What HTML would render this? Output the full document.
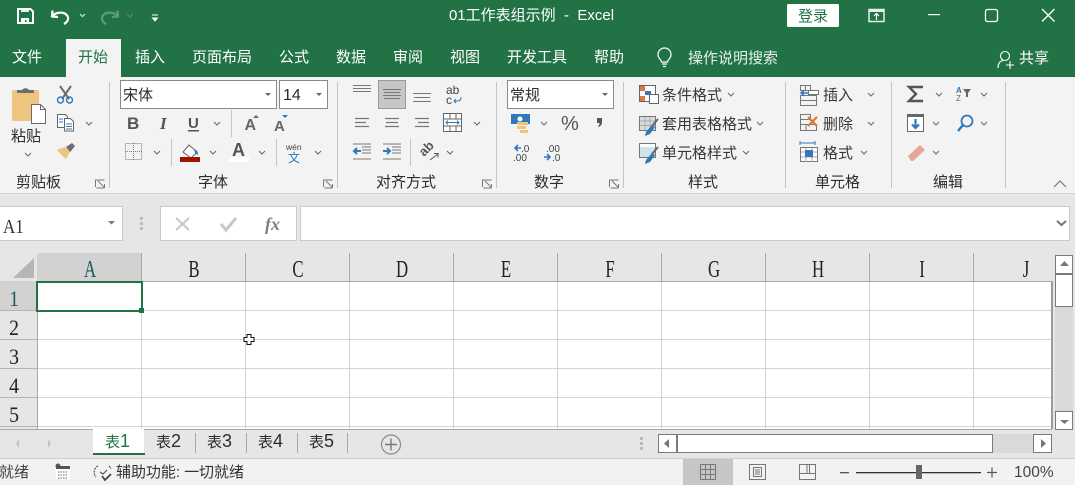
<!DOCTYPE html>
<html><head><meta charset="utf-8"><style>
html,body{margin:0;padding:0;background:#e6e6e6;overflow:hidden}
svg{display:block;position:absolute;left:0;top:0}
text{font-family:"Liberation Sans","Noto Sans CJK SC",sans-serif;font-size:15px;fill:#2c2c2c}
.w{fill:#fff}.t{font-size:15px}
.s{font-family:"Liberation Serif","Noto Serif CJK SC",serif;font-size:24px;text-anchor:middle;fill:#222}
.r{font-family:"Liberation Serif",serif;font-size:22px;text-anchor:middle;fill:#222}
.g{font-size:15px;fill:#383838}
.d{font-size:18px}
</style></head><body>
<svg width="1075" height="485" viewBox="0 0 1075 485" xmlns="http://www.w3.org/2000/svg">
<defs><path id="c" d="M0 0l3 3l3-3" fill="none" stroke="#666" stroke-width="1"/></defs>
<rect width="1075" height="485" fill="#e6e6e6"/>
<rect width="1075" height="77" fill="#217346"/>
<rect y="77" width="1075" height="116" fill="#f3f3f3"/>
<rect y="193" width="1075" height="1" fill="#d2d2d2"/>
<rect x="66" y="39" width="55" height="38" fill="#f3f3f3"/>

<!-- QAT -->
<path d="M18 9h12.500l2.500 2.500v11.500h-15z" fill="none" stroke="#fff" stroke-width="2"/>
<rect x="21" y="9" width="8" height="3" fill="#fff" opacity=".9"/>
<path d="M21 24v-6h8v6h-2.500v-4h-1.500v4z" fill="#fff"/>
<path d="M52.500 10.500l-.5 6l6 .5 M52.500 16c3-4 12-5 15 0c1.500 3 0 6-3.500 8" fill="none" stroke="#fff" stroke-width="2.200"/>
<path d="M80 14l2.500 2.500l2.500-2.500" fill="none" stroke="#d5e5dc" stroke-width="1.200"/>
<path d="M117.500 10.500l.5 6l-6 .5 M117.500 16c-3-4-12-5-15 0c-1.500 3 0 6 3.500 8" fill="none" stroke="#5f9a7c" stroke-width="2.200"/>
<path d="M127 14l3 3l3-3" fill="none" stroke="#4f8e6e" stroke-width="1.200"/>
<path d="M152 15h6M152.500 18h5l-2.500 3z" stroke="#fff" fill="#fff" stroke-width="1"/>

<text x="449" y="20" class="w" style="font-size:15px" xml:space="preserve">01工作表组示例  -  Excel</text>

<rect x="787" y="4" width="52" height="23" rx="1.500" fill="#fff"/>
<text x="798" y="21" style="font-size:15px;fill:#217346">登录</text>
<rect x="869" y="9.500" width="15" height="12" fill="none" stroke="#e6efea" stroke-width="1.500"/><rect x="869" y="9" width="15" height="3" fill="#e6efea"/><path d="M876.500 20v-6M874 16l2.500-2.500l2.500 2.500" fill="none" stroke="#fff" stroke-width="1.200"/>
<rect x="928" y="14" width="12" height="1.200" fill="#fff"/>
<rect x="985.500" y="9.500" width="12" height="12" rx="2" fill="none" stroke="#fff" stroke-width="1.300"/>
<path d="M1042 9l12.500 12.500M1054.500 9l-12.500 12.500" stroke="#fff" stroke-width="1.300" fill="none"/>

<!-- tabs -->
<text x="12" y="62" class="w t">文件</text>
<text x="78" y="62" class="t" style="fill:#217346">开始</text>
<text x="135" y="62" class="w t">插入</text>
<text x="192" y="62" class="w t">页面布局</text>
<text x="279" y="62" class="w t">公式</text>
<text x="336" y="62" class="w t">数据</text>
<text x="393" y="62" class="w t">审阅</text>
<text x="450" y="62" class="w t">视图</text>
<text x="507" y="62" class="w t">开发工具</text>
<text x="594" y="62" class="w t">帮助</text>
<text x="688" y="63" class="w t" style="fill:#e8f0ec">操作说明搜索</text>
<text x="1019" y="63" class="w t">共享</text>
<path d="M661.500 62c0-2-3.500-3.500-3.500-7.500a6.500 6.500 0 0 1 13 0c0 4-3.500 5.500-3.500 7.500zM662 64h5M663 66.500h3" fill="none" stroke="#fff" stroke-width="1.200"/>
<circle cx="1005" cy="56" r="4.500" fill="none" stroke="#fff" stroke-width="1.100"/><path d="M998 68c0-5 2-7 5-7.500M1006 65h8M1010 61v8" fill="none" stroke="#fff" stroke-width="1.100"/>

<!-- separators -->
<g fill="#c4c4c4">
<rect x="109" y="82" width="1" height="106"/><rect x="337" y="82" width="1" height="106"/><rect x="496" y="82" width="1" height="106"/><rect x="623" y="82" width="1" height="106"/><rect x="785" y="82" width="1" height="106"/><rect x="891" y="82" width="1" height="106"/><rect x="1005" y="82" width="1" height="106"/>
<rect x="231" y="110" width="1" height="27"/><rect x="171" y="139" width="1" height="27"/><rect x="276" y="139" width="1" height="27"/><rect x="410" y="139" width="1" height="27"/>
</g>

<!-- clipboard -->
<rect x="12" y="90" width="27" height="31" rx="2" fill="#edc57f"/>
<path d="M17 93v-3h5a4 3.500 0 0 1 7 0h5v3z" fill="#6d6d6d"/>
<path d="M31.500 104.500h9l5 5v14h-14z" fill="#fff" stroke="#6a6a6a"/>
<path d="M40.500 104.500v5h5" fill="none" stroke="#6a6a6a"/>
<text x="11" y="141" style="font-size:15px">粘贴</text>
<use href="#c" x="25" y="153"/>
<path d="M60 86l9 13M71 86l-9 13" stroke="#6d6d6d" stroke-width="2" fill="none"/>
<circle cx="60.500" cy="100" r="3" fill="none" stroke="#2f78b9" stroke-width="1.400"/><circle cx="69.500" cy="100" r="3" fill="none" stroke="#2f78b9" stroke-width="1.400"/>
<path d="M57.500 114.500h8l2 2v11h-10z" fill="#fff" stroke="#666"/><path d="M64.500 118.500h6l3 3v9.500h-9z" fill="#fff" stroke="#666"/><path d="M66 124h6M66 126.500h6M66 129h6" stroke="#2f78b9"/><path d="M59 119h4M59 122h4" stroke="#2f78b9"/>
<use href="#c" x="86" y="122"/>
<path d="M57 150l8-3l5 5l-4 7q-5-4-9-9z" fill="#edc57f"/><path d="M66 147l6-4l3 3l-4 5l-1 1z" fill="#6d6d6d"/>

<!-- font -->
<rect x="120.500" y="80.500" width="156" height="28" fill="#fff" stroke="#8a8a8a"/>
<text x="123" y="100" style="font-size:15px">宋体</text>
<path d="M265 93h6l-3 3z" fill="#666"/>
<rect x="279.500" y="80.500" width="48" height="28" fill="#fff" stroke="#8a8a8a"/>
<text x="283" y="100" style="font-size:16px">14</text>
<path d="M316 93h6l-3 3z" fill="#666"/>
<text x="127" y="129" style="font:bold 17px 'Liberation Sans';fill:#555">B</text>
<text x="160" y="129" style="font:italic bold 17px 'Liberation Serif';fill:#555">I</text>
<text x="188" y="128" style="font:bold 15px 'Liberation Sans';fill:#555">U</text><rect x="188" y="130" width="11" height="1.500" fill="#555"/>
<use href="#c" x="214" y="122"/>
<text x="244.500" y="130" style="font:bold 16px 'Liberation Sans';fill:#666">A</text><path d="M253 118h6l-3-3z" fill="#2f78b9"/>
<text x="274" y="131" style="font:bold 15px 'Liberation Sans';fill:#666">A</text><path d="M282 115h6l-3 3z" fill="#2f78b9"/>
<rect x="125.500" y="143.500" width="16" height="16" fill="none" stroke="#777" stroke-dasharray="1 1"/><path d="M133.500 143v17M125 151.500h17" stroke="#777" stroke-dasharray="1 1"/>
<use href="#c" x="154" y="151"/>
<path d="M183 152l6-7l8 7l-6 6z" fill="#fff" stroke="#666"/><path d="M194 149c3 1 4 3 4 6l-3-2z" fill="#2f78b9"/>
<rect x="180" y="157" width="20" height="5" fill="#a61000"/>
<use href="#c" x="210" y="151"/>
<text x="232" y="156" style="font:bold 18px 'Liberation Sans';fill:#555">A</text>
<rect x="229" y="157" width="20" height="5" fill="#fff"/>
<use href="#c" x="259" y="151"/>
<text x="286" y="150" style="font-size:8.500px;fill:#444">wén</text><text x="288" y="162" style="font-size:12px;fill:#2f78b9">文</text>
<use href="#c" x="315" y="151"/>

<!-- alignment -->
<rect x="378.500" y="80.500" width="27" height="28" fill="#c6c6c6" stroke="#9a9a9a"/>
<path d="M353 85.500h18M353 88.500h18M353 91.500h18 M383 89.500h18M384 92.500h16M383 95.500h18M384 98.500h16 M413 93.500h18M414 97.500h16M413 101.500h18" stroke="#777" fill="none"/>
<text x="446" y="94" style="font-size:12px;fill:#444">ab</text><text x="446" y="104" style="font-size:12px;fill:#444">c</text><path d="M461 97c0 3-1 4-3 4h-4M456 99l-2 2l2 2" stroke="#2f78b9" fill="none"/>
<path d="M355 118.500h14M355 122.500h11M355 126.500h14 M385 118.500h14M386 122.500h12M385 126.500h14 M415 118.500h14M418 122.500h11M415 126.500h14" stroke="#777" stroke-width="1.200"/>
<rect x="443.500" y="113.500" width="18" height="18" fill="#fff" stroke="#666"/><path d="M444 119h17M444 126h17M450 114v5M456 114v5M450 126v5M456 126v5" stroke="#666"/><path d="M446 122.500h13M448 120.500l-2 2l2 2M457 120.500l2 2l-2 2" stroke="#2f78b9" fill="none"/>
<use href="#c" x="474" y="122"/>
<path d="M353 144h18M362 147h9M362 150h9M362 153h9M353 159h18" stroke="#777"/><path d="M361 151h-7M357 148l-3 3l3 3" stroke="#2f78b9" stroke-width="2" fill="none"/>
<path d="M383 144h18M392 147h9M392 150h9M392 153h9M383 159h18" stroke="#777"/><path d="M383 151h7M387 148l3 3l-3 3" stroke="#2f78b9" stroke-width="2" fill="none"/>
<text transform="translate(424,157) rotate(-45)" style="font:bold 13px 'Liberation Sans';fill:#555">ab</text><path d="M430 160l8-6M434 153.500h4v4" stroke="#555" fill="none"/>
<use href="#c" x="447" y="151"/>

<!-- number -->
<rect x="507.500" y="80.500" width="106" height="28" fill="#fff" stroke="#8a8a8a"/>
<text x="510" y="100" style="font-size:15px">常规</text>
<path d="M602 93h6l-3 3z" fill="#666"/>
<rect x="511" y="114" width="19" height="10" fill="#2f78b9"/><circle cx="520" cy="119" r="2.500" fill="#fff"/>
<rect x="517" y="122" width="11" height="3" fill="#edc57f"/><rect x="517" y="126" width="9" height="3" fill="#edc57f"/><rect x="520" y="130" width="8" height="3" fill="#edc57f"/>
<use href="#c" x="541" y="122"/>
<text x="561" y="130" style="font-size:20px;fill:#555">%</text>
<path d="M597 118h5v4q0 3-3 5l-1-1q1.500-1 1.500-3h-2.500z" fill="#555"/>
<text x="521" y="152" style="font-size:10px;fill:#444">.0</text><text x="513" y="161" style="font-size:10px;fill:#444">.00</text><path d="M521 148h-6M518 145l-3 3l3 3" stroke="#2f78b9" stroke-width="1.600" fill="none"/>
<text x="546" y="152" style="font-size:10px;fill:#444">.00</text><text x="552" y="161" style="font-size:10px;fill:#444">.0</text><path d="M544 157h6M547 154l3 3l-3 3" stroke="#2f78b9" stroke-width="1.600" fill="none"/>

<!-- styles -->
<rect x="639.500" y="85.500" width="16" height="16" fill="#fff" stroke="#666"/><rect x="640" y="86" width="5" height="5" fill="#d97a3a"/><rect x="645" y="91" width="6" height="4" fill="#2f78b9"/><rect x="640" y="96" width="5" height="5" fill="#d97a3a"/><rect x="649.500" y="94.500" width="9" height="9" fill="#fff" stroke="#666"/>
<text x="662" y="100" class="g">条件格式</text><use href="#c" x="728" y="93"/>
<rect x="639.500" y="116.500" width="16" height="14" fill="#d6dde0" stroke="#777"/><path d="M640 121h15M640 125.500h15M645 117v13M650 117v13" stroke="#aaa"/><path d="M646 132l6-7l3 2l-5 7l-5 2z" fill="#2f78b9"/><path d="M652 126l6-7" stroke="#666" stroke-width="2"/>
<text x="662" y="129" class="g">套用表格格式</text><use href="#c" x="757" y="122"/>
<rect x="639.500" y="143.500" width="16" height="14" fill="#cfe3e8" stroke="#777"/><rect x="640" y="144" width="15" height="3" fill="#fff"/><path d="M646 160l6-7l3 2l-5 7l-5 2z" fill="#2f78b9"/><path d="M652 154l6-7" stroke="#666" stroke-width="2"/>
<text x="662" y="158" class="g">单元格样式</text><use href="#c" x="743" y="151"/>

<!-- cells -->
<path d="M800.500 85.500h10v5h-10zM800.500 95.500h16v5h-16zM800.500 100.500h16v5h-16zM805.500 86v5" fill="none" stroke="#777"/><path d="M801 93h8M804 90.500l-3 2.500l3 2.500" stroke="#2f78b9" stroke-width="1.500" fill="none"/><rect x="808.500" y="90.500" width="10" height="4" fill="#fff" stroke="#777"/>
<text x="823" y="100" class="g">插入</text><use href="#c" x="868" y="93"/>
<path d="M800.500 114.500h10v5h-10zM800.500 124.500h16v6h-16zM806 125v5M800.500 119.500v5" fill="none" stroke="#777"/><path d="M808 117l9 9M817 117l-9 9" stroke="#d97a3a" stroke-width="2.200"/>
<text x="823" y="129" class="g">删除</text><use href="#c" x="868" y="122"/>
<path d="M800 143h15M800 141v4M815 141v4" stroke="#2f78b9" fill="none"/><rect x="800.500" y="147.500" width="17" height="14" fill="#fff" stroke="#777"/><path d="M806 148v14M812 148v14M801 152h16M801 157h16" stroke="#aaa"/><rect x="805" y="150" width="8" height="7" fill="#2f78b9"/>
<text x="823" y="158" class="g">格式</text><use href="#c" x="861" y="151"/>

<!-- editing -->
<path d="M923 87h-14l7 7l-7 7h14" fill="none" stroke="#555" stroke-width="2.400"/>
<use href="#c" x="936" y="93"/>
<text x="956" y="93" style="font:bold 8px 'Liberation Sans';fill:#2f78b9">A</text><text x="956" y="101" style="font:8px 'Liberation Sans';fill:#666">Z</text><path d="M963 89h8l-3 4v4h-2v-4z" fill="#666"/>
<use href="#c" x="981" y="93"/>
<rect x="907.500" y="114.500" width="16" height="17" fill="#fff" stroke="#666"/><rect x="907" y="114" width="17" height="3" fill="#666"/><path d="M915.500 119v9M912 124.500l3.500 3.500l3.500-3.500" stroke="#2f78b9" stroke-width="2.200" fill="none"/>
<use href="#c" x="933" y="122"/>
<circle cx="967" cy="121" r="5.500" fill="none" stroke="#2f78b9" stroke-width="1.800"/><path d="M963 125l-5 6" stroke="#2f78b9" stroke-width="2.400"/>
<use href="#c" x="981" y="122"/>
<path d="M908 156l12-11l5 5l-12 11h-2z" fill="#e5a898"/><use href="#c" x="933" y="151"/>

<!-- group labels -->
<text x="16" y="187">剪贴板</text><text x="198" y="187">字体</text><text x="376" y="187">对齐方式</text><text x="534" y="187">数字</text><text x="688" y="187">样式</text><text x="815" y="187">单元格</text><text x="933" y="187">编辑</text>
<g fill="none" stroke="#777">
<path d="M95.500 187v-7h9M104.500 188h-8M98 181l6 6M104.500 184v4"/>
<path d="M323.500 187v-7h9M332.500 188h-8M326 181l6 6M332.500 184v4"/>
<path d="M482.500 187v-7h9M491.500 188h-8M485 181l6 6M491.500 184v4"/>
<path d="M609.500 187v-7h9M618.500 188h-8M612 181l6 6M618.500 184v4"/>
<path d="M1054 187l6-6l6 6" stroke="#666"/>
</g>

<!-- formula bar -->
<rect x="-1" y="206.500" width="123.500" height="34" fill="#fff" stroke="#cbcbcb"/>
<text transform="translate(3,233) scale(.85,1)" style="font-family:'Liberation Serif',serif;font-size:20px;fill:#333">A1</text>
<path d="M108 221h7l-3.500 3.500z" fill="#777"/>
<rect x="140" y="217" width="3" height="3" fill="#bbb"/><rect x="140" y="222" width="3" height="3" fill="#bbb"/><rect x="140" y="227" width="3" height="3" fill="#bbb"/>
<rect x="160.500" y="206.500" width="136" height="34" fill="#fff" stroke="#cbcbcb"/>
<path d="M176 218l13 12M189 218l-13 12" stroke="#c8c8c8" stroke-width="2.200"/>
<path d="M221 224l5 6l10-12" stroke="#c8c8c8" stroke-width="3" fill="none"/>
<text x="265" y="230" style="font:italic bold 18px 'Liberation Serif';fill:#808080">fx</text>
<rect x="300.500" y="206.500" width="769" height="34" fill="#fff" stroke="#cbcbcb"/>
<path d="M1057 221l4.500 4l4.500-4" stroke="#777" stroke-width="2" fill="none"/>

<!-- grid -->
<rect x="37" y="281" width="1015" height="148" fill="#fff"/>
<rect x="37" y="253" width="105" height="28" fill="#d2d2d2"/>
<rect x="0" y="281" width="37" height="30" fill="#d2d2d2"/>
<path d="M13 278l21-20v20z" fill="#b5b5b5"/>
<g stroke="#d4d4d4">
<path d="M0 310.500H1052M0 339.500H1052M0 368.500H1052M0 397.500H1052M0 426.500H1052"/>
<path d="M141.500 281V429M245.500 281V429M349.500 281V429M453.500 281V429M557.500 281V429M661.500 281V429M765.500 281V429M869.500 281V429M973.500 281V429"/>
</g>
<g stroke="#a9a9a9">
<path d="M141.500 253V281M245.500 253V281M349.500 253V281M453.500 253V281M557.500 253V281M661.500 253V281M765.500 253V281M869.500 253V281M973.500 253V281"/>
<path d="M37 281.500H1052"/><path d="M37.500 281V429"/><path d="M1052 281V429" stroke-width="2" stroke="#9c9c9c"/>
<path d="M0 429.500H1052" stroke-width="1"/>
</g>
<g stroke="#b5b5b5"><path d="M0 310.500H37M0 339.500H37M0 368.500H37M0 397.500H37M0 426.500H37"/></g>
<text transform="translate(90,277) scale(.7,1)" class="s" style="fill:#1f5a5a">A</text>
<text transform="translate(194,277) scale(.7,1)" class="s">B</text>
<text transform="translate(298,277) scale(.7,1)" class="s">C</text>
<text transform="translate(402,277) scale(.7,1)" class="s">D</text>
<text transform="translate(506,277) scale(.7,1)" class="s">E</text>
<text transform="translate(610,277) scale(.7,1)" class="s">F</text>
<text transform="translate(714,277) scale(.7,1)" class="s">G</text>
<text transform="translate(818,277) scale(.7,1)" class="s">H</text>
<text transform="translate(922,277) scale(.7,1)" class="s">I</text>
<text transform="translate(1026,277) scale(.7,1)" class="s">J</text>
<text transform="translate(14,306) scale(.9,1)" class="r" style="fill:#1f5a5a">1</text>
<text transform="translate(14,335) scale(.9,1)" class="r">2</text>
<text transform="translate(14,364) scale(.9,1)" class="r">3</text>
<text transform="translate(14,393) scale(.9,1)" class="r">4</text>
<text transform="translate(14,422) scale(.9,1)" class="r">5</text>
<rect x="37" y="282" width="105" height="29" fill="#fff" stroke="#217346" stroke-width="2"/>
<rect x="139" y="308" width="5" height="5" fill="#217346"/>

<!-- v scroll -->
<rect x="1055" y="255" width="18" height="156" fill="#d9d9d9"/>
<rect x="1055.500" y="255.500" width="17" height="18" fill="#fff" stroke="#7a7a7a"/>
<path d="M1060 266h9l-4.500-5z" fill="#777"/>
<rect x="1055.500" y="274.500" width="17" height="32" fill="#fff" stroke="#7a7a7a"/><rect x="1055" y="273" width="18" height="2" fill="#7a7a7a"/>
<rect x="1055.500" y="411.500" width="17" height="18" fill="#fff" stroke="#7a7a7a"/>
<path d="M1060 420h9l-4.500 4z" fill="#777"/>

<!-- sheet tabs -->
<path d="M19 439v9l-3-4.500zM48 439v9l3-4.500z" fill="#c4c4c4"/>
<rect x="93" y="429" width="51" height="25" fill="#fff"/><rect x="93" y="453" width="52" height="2" fill="#217346"/>
<text x="105" y="447" style="fill:#217346">表<tspan class="d" style="fill:#217346">1</tspan></text>
<text x="156" y="447">表<tspan class="d">2</tspan></text><text x="207" y="447">表<tspan class="d">3</tspan></text><text x="258" y="447">表<tspan class="d">4</tspan></text><text x="309" y="447">表<tspan class="d">5</tspan></text>
<path d="M195.500 433v20M246.500 433v20M297.500 433v20M347.500 433v20" stroke="#a8a8a8"/>
<circle cx="391" cy="444.500" r="9.500" fill="none" stroke="#8a8a8a" stroke-width="1.200"/><path d="M385 444.500h12M391 438.500v12" stroke="#777" stroke-width="1.400"/>
<rect x="640" y="437" width="3" height="3" fill="#bbb"/><rect x="640" y="442" width="3" height="3" fill="#bbb"/><rect x="640" y="447" width="3" height="3" fill="#bbb"/>
<!-- h scroll -->
<rect x="658" y="434" width="393" height="19" fill="#d9d9d9"/>
<rect x="658.500" y="434.500" width="18" height="18" fill="#fff" stroke="#7a7a7a"/><path d="M669 439v9l-5-4.500z" fill="#777"/>
<rect x="677.500" y="434.500" width="315" height="18" fill="#fff" stroke="#7a7a7a"/><rect x="676" y="434" width="2" height="19" fill="#7a7a7a"/>
<rect x="1033.500" y="434.500" width="18" height="18" fill="#fff" stroke="#7a7a7a"/><path d="M1041 439v9l5-4.500z" fill="#777"/>

<!-- status bar -->
<rect y="458" width="1075" height="27" fill="#f2f2f2"/><rect y="458" width="1075" height="1" fill="#d0d0d0"/>
<text x="-1" y="477" style="font-size:15px;fill:#444">就绪</text>
<rect x="56" y="466" width="14" height="13" fill="#fff"/><rect x="56" y="466" width="14" height="3" fill="#555"/><circle cx="58" cy="466" r="2.500" fill="#555"/><path d="M58 472h10M58 475h10M58 478h10" stroke="#666" stroke-dasharray="1.500 1"/>
<path d="M98 466a7 7 0 0 0-2 11M109 466a7 7 0 0 1 2 3" fill="none" stroke="#555" stroke-width="1.200" stroke-dasharray="2 1"/><path d="M102 476l3 4l6-6" fill="none" stroke="#444" stroke-width="1.800"/><path d="M100 472l3 2l4-4" fill="none" stroke="#555" stroke-width="1.200"/>
<text x="116" y="477" style="font-size:15px;fill:#333" textLength="128">辅助功能: 一切就绪</text>
<rect x="683" y="459" width="50" height="26" fill="#c6c6c6"/>
<path d="M700.500 464.500h15v15h-15zM705.500 465v14M710.500 465v14M701 469.500h14M701 474.500h14" fill="none" stroke="#777"/>
<path d="M749.500 464.500h16v15h-16z" fill="none" stroke="#777"/><path d="M753.500 467.500h8v9h-8zM755 470h5M755 472h5M755 474h5" fill="none" stroke="#777"/>
<path d="M799.500 464.500h16v15h-16zM799.500 473.500h10v-9M809.500 473.500h6M807 465v8" fill="none" stroke="#777"/>
<rect x="840" y="472" width="9" height="1.300" fill="#555"/>
<rect x="856" y="472" width="125" height="1.300" fill="#333"/>
<rect x="916" y="465" width="6" height="14" fill="#666"/>
<path d="M987 472.500h10M992 467.500v10" stroke="#555" stroke-width="1.200"/>
<text x="1014" y="477" style="font-size:15.500px;fill:#444">100%</text>

<!-- cursor -->
<path d="M247 334.500h4v3h3v4h-3v3h-4v-3h-3v-4h3z" fill="#fff" stroke="#111"/>
</svg>
</body></html>
